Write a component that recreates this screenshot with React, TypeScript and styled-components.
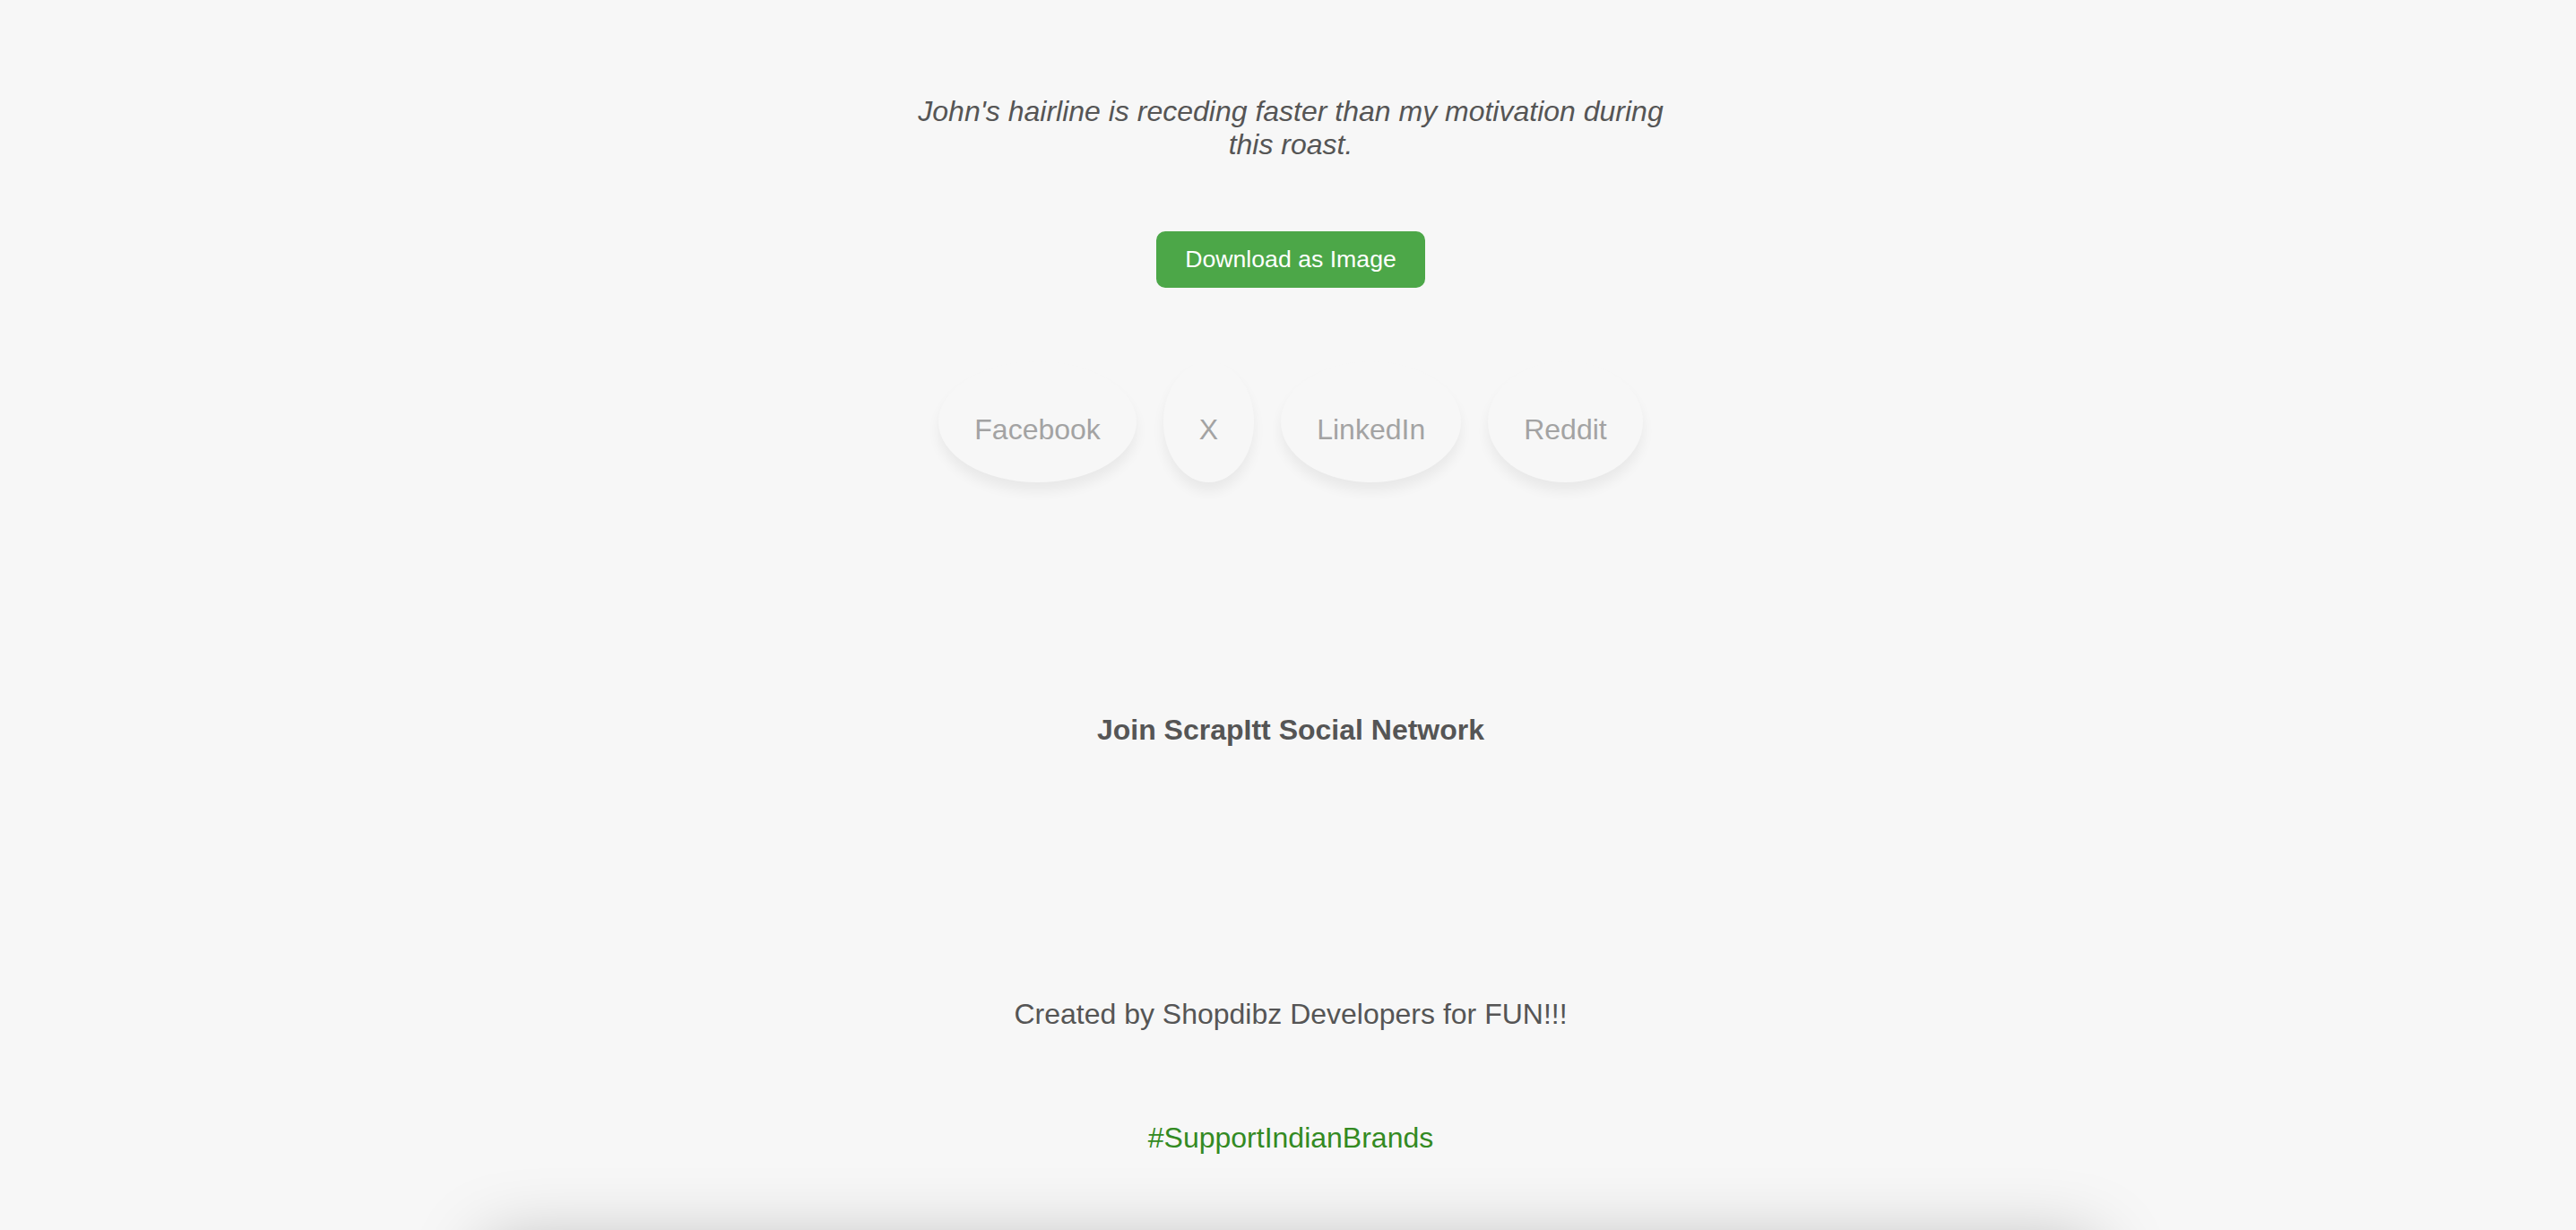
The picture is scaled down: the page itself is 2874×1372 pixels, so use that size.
import React from 'react'
import styled, { createGlobalStyle } from 'styled-components'

const GlobalStyle = createGlobalStyle`
  html, body {
    margin: 0;
    background: #f7f7f7;
  }
  body {
    font-family: "Liberation Sans", Arial, sans-serif;
  }
`

const Page = styled.div`
  height: 100vh;
  overflow: hidden;
  box-sizing: border-box;
  padding: 106px 0 0 6px;
  display: flex;
  flex-direction: column;
  align-items: center;
`

const Quote = styled.p`
  margin: 0;
  max-width: 860px;
  font-size: 32px;
  font-style: italic;
  color: #555;
  text-align: center;
`

const DownloadButton = styled.button`
  margin-top: 78px;
  font-family: "Liberation Sans", Arial, sans-serif;
  font-size: 26.67px;
  color: #fff;
  background: #4ca748;
  border: none;
  border-radius: 10px;
  padding: 16px 32px;
`

const ShareRow = styled.div`
  margin-top: 82px;
  display: flex;
  gap: 30px;
`

const ShareButton = styled.button`
  font-family: "Liberation Sans", Arial, sans-serif;
  font-size: 32px;
  color: #a3a3a3;
  background: #f7f7f7;
  border: none;
  border-radius: 50%;
  padding: 58px 40px 40px;
  box-shadow: 0 10px 14px rgba(0, 0, 0, 0.06);
`

const Heading = styled.h3`
  margin: 258px 0 0;
  font-size: 32px;
  font-weight: bold;
  color: #555;
`

const Credit = styled.p`
  margin: 280px 0 0;
  font-size: 32px;
  color: #555;
`

const Tag = styled.p`
  margin: 101px 0 0;
  font-size: 32px;
  color: #338a22;
`

const Card = styled.div`
  margin-top: 98px;
  flex-shrink: 0;
  width: 1800px;
  height: 600px;
  background: #f7f7f7;
  border-radius: 20px;
  box-shadow: 0 0 80px rgba(0, 0, 0, 0.25);
`

const shares = ['Facebook', 'X', 'LinkedIn', 'Reddit']

function App() {
  return (
    <>
      <GlobalStyle />
      <Page>
        <Quote>John's hairline is receding faster than my motivation during this roast.</Quote>
        <DownloadButton>Download as Image</DownloadButton>
        <ShareRow>
          {shares.map(s => <ShareButton key={s}>{s}</ShareButton>)}
        </ShareRow>
        <Heading>Join ScrapItt Social Network</Heading>
        <Credit>Created by Shopdibz Developers for FUN!!!</Credit>
        <Tag>#SupportIndianBrands</Tag>
        <Card />
      </Page>
    </>
  )
}

export default App
